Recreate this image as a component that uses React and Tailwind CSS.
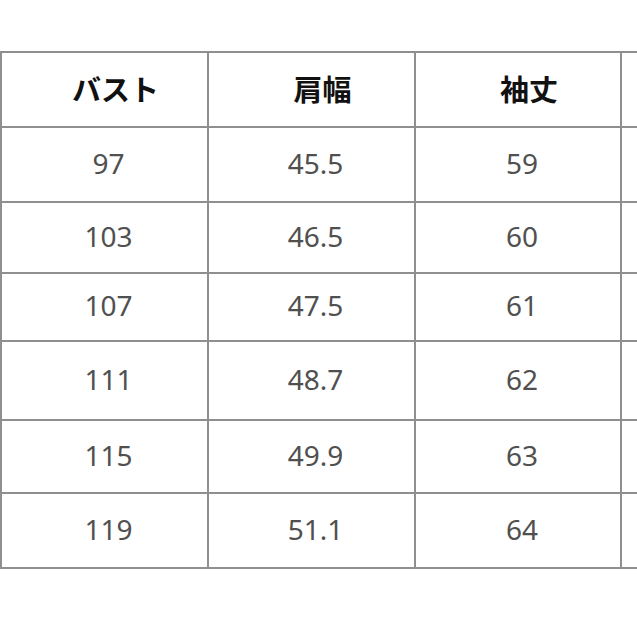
import React from "react";

const rows = [
  { h: "h-[75px]", v: ["97", "45.5", "59"] },
  { h: "h-[71px]", v: ["103", "46.5", "60"] },
  { h: "h-[68px]", v: ["107", "47.5", "61"] },
  { h: "h-[79px]", v: ["111", "48.7", "62"] },
  { h: "h-[73px]", v: ["115", "49.9", "63"] },
  { h: "h-[75px]", v: ["119", "51.1", "64"] },
];

const widths = ["w-[207px]", "w-[207px]", "w-[206px]", "w-[200px]"];

export default function App() {
  return (
    <div className="w-[637px] h-[637px] bg-white overflow-hidden pt-[51px]">
      <div className="w-[822px] border-t-2 border-l-2 border-[#8f8f8f]">
        <div className="flex h-[75px]">
          {["バスト", "肩幅", "袖丈", ""].map((t, i) => (
            <div
              key={i}
              className={`${widths[i]} shrink-0 border-r-2 border-b-2 border-[#8f8f8f] flex items-center justify-center pl-[22px] pb-[2px] text-[29px] font-bold text-[#111111] [font-family:'Noto_Sans_CJK_JP','Noto_Sans',sans-serif]`}
            >
              {t}
            </div>
          ))}
        </div>
        {rows.map((r, ri) => (
          <div key={ri} className={`flex ${r.h}`}>
            {[...r.v, ""].map((t, i) => (
              <div
                key={i}
                className={`${widths[i]} shrink-0 border-r-2 border-b-2 border-[#8f8f8f] flex items-center justify-center pl-[8px] pb-[4px] text-[28px] text-[#505050] [font-family:'Noto_Sans',sans-serif]`}
              >
                {t}
              </div>
            ))}
          </div>
        ))}
      </div>
    </div>
  );
}
